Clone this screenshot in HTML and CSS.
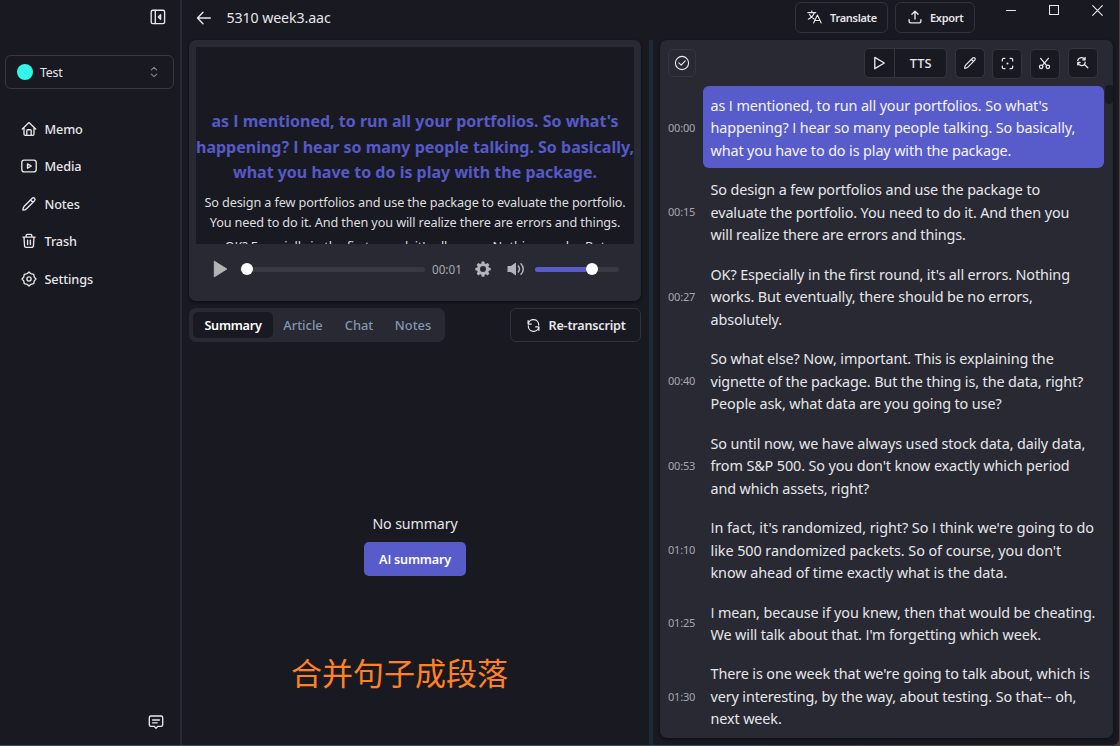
FILE: index.html
```
<!DOCTYPE html>
<html lang="en">
<head>
<meta charset="utf-8">
<title>5310 week3.aac</title>
<link rel="stylesheet" href="styles.css">
</head>
<body>
<div class="window">
  <aside class="sidebar">
    <div class="sidebar-top">
      <svg class="icon" width="16" height="16" viewBox="0 0 16 16"><rect x="1.2" y="1.2" width="13.4" height="13.4" rx="1.6"/><path d="M5.3 1.2v13.4M10.6 5.7 8.4 8l2.2 2.3z"/></svg>
    </div>
    <div class="account">
      <span class="avatar"></span><span class="account-name">Test</span>
      <svg class="icon muted" width="8" height="12" viewBox="0 0 8 12"><path d="M1.3 3.9 4 1.3l2.7 2.6M1.3 8.1 4 10.7l2.7-2.6"/></svg>
    </div>
    <nav class="nav">
      <a class="nav-item"><svg class="icon" width="16" height="16" viewBox="0 0 16 16"><path d="M1.3 8 8 1.6 14.7 8M3 6.8v6.1c0 .9.5 1.4 1.4 1.4h7.2c.9 0 1.4-.5 1.4-1.4V6.8M5.8 14.2V9.6c0-.6.3-.9.9-.9h2.6c.6 0 .9.3.9.9v4.6"/></svg>Memo</a>
      <a class="nav-item"><svg class="icon" width="16" height="16" viewBox="0 0 16 16"><rect x=".8" y="2.1" width="14.4" height="11.8" rx="2.4"/><path d="m6.5 5.8 3.8 2.2-3.8 2.2z"/></svg>Media</a>
      <a class="nav-item"><svg class="icon" width="16" height="16" viewBox="0 0 16 16"><path d="M1.9 14.1c0-1.6.2-2.7 1.3-3.9l8-7.9c.7-.7 1.7-.6 2.3 0 .7.7.7 1.7 0 2.4l-7.9 8c-1.1 1.1-2.3 1.4-3.7 1.4zM9.6 4l2.3 2.3"/></svg>Notes</a>
      <a class="nav-item"><svg class="icon" width="16" height="16" viewBox="0 0 16 16"><path d="M1.9 4.1h12.2M5.2 4V2.5c0-.7.4-1.1 1.1-1.1h3.4c.7 0 1.1.4 1.1 1.1V4M3 4.2l.6 9c.1.8.5 1.2 1.3 1.2h6.2c.8 0 1.2-.4 1.3-1.2l.6-9M6.6 7.1v4.5M9.4 7.1v4.5"/></svg>Trash</a>
      <a class="nav-item"><svg class="icon" width="16" height="16" viewBox="0 0 16 16"><path d="M8 1 9.9 2.7 12.7 3.3 13.3 6.1 15 8 13.3 9.9 12.7 12.7 9.9 13.3 8 15 6.1 13.3 3.3 12.7 2.7 9.9 1 8 2.7 6.1 3.3 3.3 6.1 2.7z"/><circle cx="8" cy="8" r="2.1"/></svg>Settings</a>
    </nav>
    <div class="sidebar-bottom">
      <svg class="icon" width="16" height="16" viewBox="0 0 16 16"><path d="M3 2h10c1.1 0 1.7.6 1.7 1.7v7.1c0 1-.6 1.6-1.7 1.6H9.7L8 14.3l-1.7-1.9H3c-1.1 0-1.7-.6-1.7-1.6V3.7C1.3 2.6 1.9 2 3 2zM4.6 6h6.8M4.6 8.8h4.6"/></svg>
    </div>
  </aside>

  <main class="main">
    <header class="titlebar">
      <svg class="icon back" width="16" height="16" viewBox="0 0 16 16"><path d="M14.3 8H1.7M7 2.3 1.5 8 7 13.7"/></svg>
      <h1 class="title">5310 week3.aac</h1>
      <div class="title-actions">
        <button class="btn"><svg class="icon thin" width="15" height="14" viewBox="0 0 15 14"><path d="M.8 2.6h8M4.8.8v1.8M7.3 2.7C6.5 5 4.2 7.8 1.3 9.3M2.5 4.6c1 2 2.8 3.6 4.6 4.5M6.6 13l3.8-8 3.8 8M7.9 10.5h5"/></svg>Translate</button>
        <button class="btn export"><svg class="icon" width="14" height="14" viewBox="0 0 14 14"><path d="M7 9V1.3M3.9 4.2 7 1.2l3.1 3M1.1 9.6v1.7c0 1 .5 1.5 1.5 1.5h8.8c1 0 1.5-.5 1.5-1.5V9.6"/></svg>Export</button>
      </div>
      <div class="window-controls">
        <svg class="icon thin" width="10" height="10" viewBox="0 0 10 10"><path d="M.5 5.5h9"/></svg>
        <svg class="icon thin" width="10" height="10" viewBox="0 0 10 10"><rect x=".5" y=".5" width="9" height="9"/></svg>
        <svg class="icon thin" width="11" height="11" viewBox="0 0 11 11"><path d="m.7.7 9.6 9.6M10.3.7.7 10.3"/></svg>
      </div>
    </header>

    <div class="columns">
      <section class="left">
        <div class="player">
          <div class="captions">
            <p class="caption-now">as <span class="cap">I</span> mentioned, to run all your portfolios. So what's<br>happening? <span class="cap">I</span> hear so many people talking. So basically,<br>what you have to do is play with the package.</p>
            <p class="caption-next">So design a few portfolios and use the package to evaluate the portfolio.<br>You need to do it. And then you will realize there are errors and things.</p>
            <p class="caption-next">OK? Especially in the first round, it's all errors. Nothing works. But</p>
          </div>
          <div class="controls">
            <svg class="play" width="15" height="18" viewBox="0 0 15 18"><path d="M1.3 1.2 13.8 9 1.3 16.8z"/></svg>
            <div class="seek"><span class="knob"></span></div>
            <span class="clock">00:01</span>
            <svg class="gear" width="16" height="16" viewBox="0 0 16 16"><path fill-rule="evenodd" d="m6.7.6-.4 1.9-1.2.5-1.7-1.1-1.8 1.8L2.7 5.4l-.5 1.2-1.9.3v2.4l1.9.4.5 1.2-1.1 1.7 1.8 1.8 1.7-1.1 1.2.5.4 1.9h2.6l.4-1.9 1.2-.5 1.7 1.1 1.8-1.8-1.1-1.7.5-1.2 1.9-.4V6.9l-1.9-.3-.5-1.2 1.1-1.7-1.8-1.8-1.7 1.1-1.2-.5-.4-1.9zM8 5a3 3 0 1 1 0 6 3 3 0 0 1 0-6z"/></svg>
            <svg class="speaker" width="18" height="16" viewBox="0 0 18 16"><path class="solid" d="M.5 5h3.3L9 1.5v13L3.8 11H.5z"/><path class="wave" d="M11.3 5c1.3 1.7 1.3 4.3 0 6M14 2.7c3 3 3 7.6 0 10.6"/></svg>
            <div class="volume"><span class="level"></span><span class="knob"></span></div>
          </div>
        </div>
        <div class="tab-row">
          <div class="tabs"><span class="tab active">Summary</span><span class="tab t2">Article</span><span class="tab t3">Chat</span><span class="tab t4">Notes</span></div>
          <button class="btn retry"><svg class="icon" width="13" height="13" viewBox="0 0 14 14"><path d="M1.3 5.3A5.7 5.7 0 0 1 12.6 6.5M12.7 8.7A5.7 5.7 0 0 1 1.4 7.5M1.2 1.8v3.6h3.4M12.8 12.2V8.6H9.4"/></svg>Re-transcript</button>
        </div>
        <div class="empty">
          <p class="empty-label">No summary</p>
          <button class="primary">A<span class="cap">I</span> summary</button>
          <p class="note" lang="zh">合并句子成段落</p>
        </div>
      </section>

      <div class="divider"></div>

      <section class="transcript">
        <div class="toolbar">
          <span class="tool check"><svg class="icon thin" width="16" height="16" viewBox="0 0 16 16"><circle cx="8" cy="8" r="6.6"/><path d="m4.9 7.9 2.3 2.3 4-4.3"/></svg></span>
          <span class="tool-group"><span class="tts-play"><svg class="icon" width="13" height="14" viewBox="0 0 13 14"><path d="M1.8 1.3 11.3 7l-9.5 5.7z"/></svg></span><span class="tts">TTS</span></span>
          <span class="tool"><svg class="icon" width="14" height="14" viewBox="0 0 16 16"><path d="M1.9 14.1c0-1.6.2-2.7 1.3-3.9l8-7.9c.7-.7 1.7-.6 2.3 0 .7.7.7 1.7 0 2.4l-7.9 8c-1.1 1.1-2.3 1.4-3.7 1.4zM9.6 4l2.3 2.3"/></svg></span>
          <span class="tool low"><svg class="icon" width="13" height="13" viewBox="0 0 14 14"><path d="M1.4 4.2V2.9c0-.9.6-1.5 1.5-1.5h1.3M9.8 1.4h1.3c.9 0 1.5.6 1.5 1.5v1.3M12.6 9.8v1.3c0 .9-.6 1.5-1.5 1.5H9.8M4.2 12.6H2.9c-.9 0-1.5-.6-1.5-1.5V9.8"/><circle class="dot" cx="7" cy="7" r="1.1"/></svg></span>
          <span class="tool low"><svg class="icon" width="13" height="13" viewBox="0 0 14 14"><path d="M2.8 1.4 9.4 9.2M11.2 1.4 4.6 9.2"/><circle cx="3.4" cy="10.6" r="1.9"/><circle cx="10.6" cy="10.6" r="1.9"/></svg></span>
          <span class="tool"><svg class="icon" width="13" height="13" viewBox="0 0 14 14"><path d="M1.8 4.8A4.3 4.3 0 0 1 9.6 3.9M9.8 1.5v2.6H7.2M1.9 9.6V7h2.5M2 7.2a4.3 4.3 0 0 0 7.1 1.9M9.8 6.5a4 4 0 0 1-.7 2.6l3.6 3.6"/></svg></span>
        </div>
        <ol class="lines">
          <li class="line current"><time>00:00</time><p>as <span class="cap">I</span> mentioned, to run all your portfolios. So what's<br>happening? <span class="cap">I</span> hear so many people talking. So basically,<br>what you have to do is play with the package.</p></li>
          <li class="line"><time>00:15</time><p>So design a few portfolios and use the package to<br>evaluate the portfolio. You need to do it. And then you<br>will realize there are errors and things.</p></li>
          <li class="line"><time>00:27</time><p>OK? Especially in the first round, it's all errors. Nothing<br>works. But eventually, there should be no errors,<br>absolutely.</p></li>
          <li class="line"><time>00:40</time><p>So what else? Now, important. This is explaining the<br>vignette of the package. But the thing is, the data, right?<br>People ask, what data are you going to use?</p></li>
          <li class="line"><time>00:53</time><p>So until now, we have always used stock data, daily data,<br>from S&amp;P 500. So you don't know exactly which period<br>and which assets, right?</p></li>
          <li class="line"><time>01:10</time><p class="roomy"><span class="cap">I</span>n fact, it's randomized, right? So <span class="cap">I</span> think we're going to do<br>like 500 randomized packets. So of course, you don't<br>know ahead of time exactly what is the data.</p></li>
          <li class="line"><time>01:25</time><p><span class="cap">I</span> mean, because if you knew, then that would be cheating.<br>We will talk about that. <span class="cap">I</span>'m forgetting which week.</p></li>
          <li class="line"><time>01:30</time><p>There is one week that we're going to talk about, which is<br>very interesting, by the way, about testing. So that-- oh,<br>next week.</p></li>
        </ol>
        <span class="scroll-thumb"></span>
      </section>
    </div>
  </main>
</div>
</body>
</html>
```
FILE: styles.css
```
* { box-sizing: border-box; }
body {
  margin: 0;
  width: 1120px;
  height: 746px;
  overflow: hidden;
  background: linear-gradient(90deg, #35505f 0 60%, #50403f 100%);
  color: #e6e6e8;
  font-family: "Noto Sans", "Noto Sans CJK SC", sans-serif;
}
p, h1, ol { margin: 0; padding: 0; }
button { font: inherit; color: inherit; margin: 0; padding: 0; }

/* Capital I without crossbars */
.cap { font-family: "Open Sans", sans-serif; line-height: 1; }

.icon { fill: none; stroke: #e8e8ea; stroke-width: 1.35; stroke-linecap: round; stroke-linejoin: round; flex: none; display: block; }
.icon.thin { stroke-width: 1.1; }
.icon.muted { stroke: #85858e; stroke-width: 1.1; }
.icon .dot { fill: #e8e8ea; stroke: none; }

.window { display: flex; width: 1119px; height: 745px; background: #191921; border-radius: 0 0 6px 0; overflow: hidden; }

.sidebar { width: 182px; flex: none; border-right: 2px solid #282933; display: flex; flex-direction: column; padding: 9px 6px 15px 5px; }
.sidebar-top { display: flex; justify-content: flex-end; padding-right: 8px; height: 46px; }
.account { display: flex; align-items: center; width: 169px; height: 34px; border: 1px solid #383842; border-radius: 6px; padding: 0 15px 0 11px; }
.avatar { width: 16px; height: 16px; border-radius: 50%; background: #35f5e8; margin-right: 7px; }
.account-name { flex: 1; font-size: 12.4px; letter-spacing: -.2px; }
.nav { display: flex; flex-direction: column; padding: 20.8px 0 0 16px; }
.nav-item { display: flex; align-items: center; gap: 7.5px; height: 37.5px; font-size: 12.7px; font-weight: 500; letter-spacing: -.12px; }
.sidebar-bottom { margin-top: auto; display: flex; justify-content: flex-end; padding-right: 10px; }

.main { flex: 1; display: flex; flex-direction: column; min-width: 0; }
.titlebar { display: flex; height: 40px; padding-left: 14px; }
.back { margin-top: 10px; }
.title { margin: 7.4px 0 0 14.5px; font-size: 14.2px; line-height: 22px; font-weight: 400; letter-spacing: -.1px; }
.title-actions { display: flex; gap: 7.5px; margin: 2px 0 0 auto; }
.btn { display: flex; align-items: center; background: #191921; border: 1px solid #32323d; border-radius: 6px; font-size: 11px; font-weight: 600; letter-spacing: -.3px; }
.title-actions .btn { width: 93px; height: 30.5px; padding-left: 11.5px; gap: 8px; }
.title-actions .export { width: 80px; padding-left: 12px; }
.window-controls { display: flex; gap: 33px; margin: 5px 16px 0 31px; }

.columns { display: flex; flex: 1; padding-left: 7px; min-height: 0; }
.left { width: 452px; display: flex; flex-direction: column; }
.player { height: 260.5px; background: #282933; border-radius: 7px; padding: 7px; box-shadow: 0 1px 3px #0b0b10; }
.captions { width: 438px; height: 197px; background: #191921; overflow: hidden; padding-top: 62px; text-align: center; white-space: nowrap; }
.caption-now { color: #565ac8; font-size: 16px; line-height: 25.5px; font-weight: 700; letter-spacing: 0; }
.caption-next { font-size: 12.7px; line-height: 20px; color: #dededf; margin-top: 6.4px; letter-spacing: -.13px; }
.caption-next + .caption-next { margin-top: 4px; }
.controls { display: flex; align-items: center; height: 50px; padding-left: 17px; }
.play, .gear, .speaker .solid { fill: #b4b4b8; }
.speaker .wave { fill: none; stroke: #b4b4b8; stroke-width: 1.5; stroke-linecap: round; }
.play path { stroke: #b4b4b8; stroke-linejoin: round; }
.seek, .volume { position: relative; display: flex; align-items: center; height: 5px; border-radius: 3px; background: #393943; }
.seek { width: 185px; margin-left: 12px; }
.knob { width: 12px; height: 12px; border-radius: 50%; background: #fff; flex: none; }
.seek .knob { margin-left: 1px; }
.clock { margin-left: 7px; width: 43px; font-size: 11.7px; color: #a9a9af; }
.speaker { margin-left: 15.5px; }
.volume { width: 84px; margin-left: 10.5px; }
.level { width: 51px; height: 5px; border-radius: 3px 0 0 3px; background: #585cca; }

.tab-row { display: flex; justify-content: space-between; margin-top: 7.5px; }
.tabs { display: flex; width: 256px; height: 34px; padding: 4px; background: #282933; border-radius: 7px; font-size: 12.9px; font-weight: 500; color: #8296b0; }
.tab { display: flex; align-items: center; justify-content: center; }
.active { width: 80px; background: #191921; border-radius: 5px; color: #fff; font-weight: 600; font-size: 12.6px; letter-spacing: -.25px; padding-top: 1px; }
.t2 { width: 60px; } .t3 { width: 52px; } .t4 { width: 56px; }
.retry { width: 131px; height: 34px; padding: 1px 0 0 16px; gap: 8.5px; font-size: 12.6px; letter-spacing: -.2px; }

.empty { flex: 1; display: flex; flex-direction: column; align-items: center; padding-top: 171px; }
.empty-label { font-size: 14.2px; line-height: 22px; letter-spacing: -.1px; }
.primary { margin-top: 7px; width: 102px; height: 34px; border: 0; border-radius: 5px; background: #585cca; color: #fff; font-size: 12.6px; font-weight: 600; letter-spacing: -.2px; }
.note { margin: 73px 31px 0 0; color: #ff8124; font: 31px/45px "Noto Sans CJK SC", sans-serif; }

.divider { width: 4px; margin: 0 7px 0 8px; background: #1e2938; }

.transcript { position: relative; width: 452.5px; height: 698px; background: #282933; border-radius: 7px; padding: 7px 8px 0; box-shadow: 0 1px 3px #0b0b10; overflow: hidden; }
.toolbar { display: flex; height: 39px; padding: .5px 7px 0 0; gap: 7.6px; }
.tool, .tool-group { display: flex; align-items: center; justify-content: center; width: 30px; height: 30px; background: #191921; border: 1px solid #34353f; border-radius: 5px; flex: none; }
.tool.low { margin-top: 1px; }
.tool.check { width: 28px; height: 28px; background: none; margin: 1px auto 0 0; }
.tool-group { width: 83px; }
.tts-play { width: 30px; height: 28px; display: flex; align-items: center; justify-content: center; border-right: 1px solid #34353f; }
.tts { flex: 1; text-align: center; font-size: 12.8px; font-weight: 500; }

.lines { list-style: none; display: flex; flex-direction: column; gap: 2px; }
.line { display: flex; align-items: center; }
.line time { width: 35px; font-size: 11px; letter-spacing: -.2px; color: #a6a6ad; }
.line p { width: 401px; padding: 8.6px 7.5px 6.4px; border-radius: 6px; font-size: 14.4px; line-height: 22.5px; letter-spacing: -.12px; white-space: nowrap; }
.line .roomy { letter-spacing: -.06px; }
.current p { background: #585cca; color: #f4f4fa; }
.scroll-thumb { position: absolute; right: 0; top: 45px; width: 8px; height: 19px; border-radius: 4px; background: #191921; }
```
